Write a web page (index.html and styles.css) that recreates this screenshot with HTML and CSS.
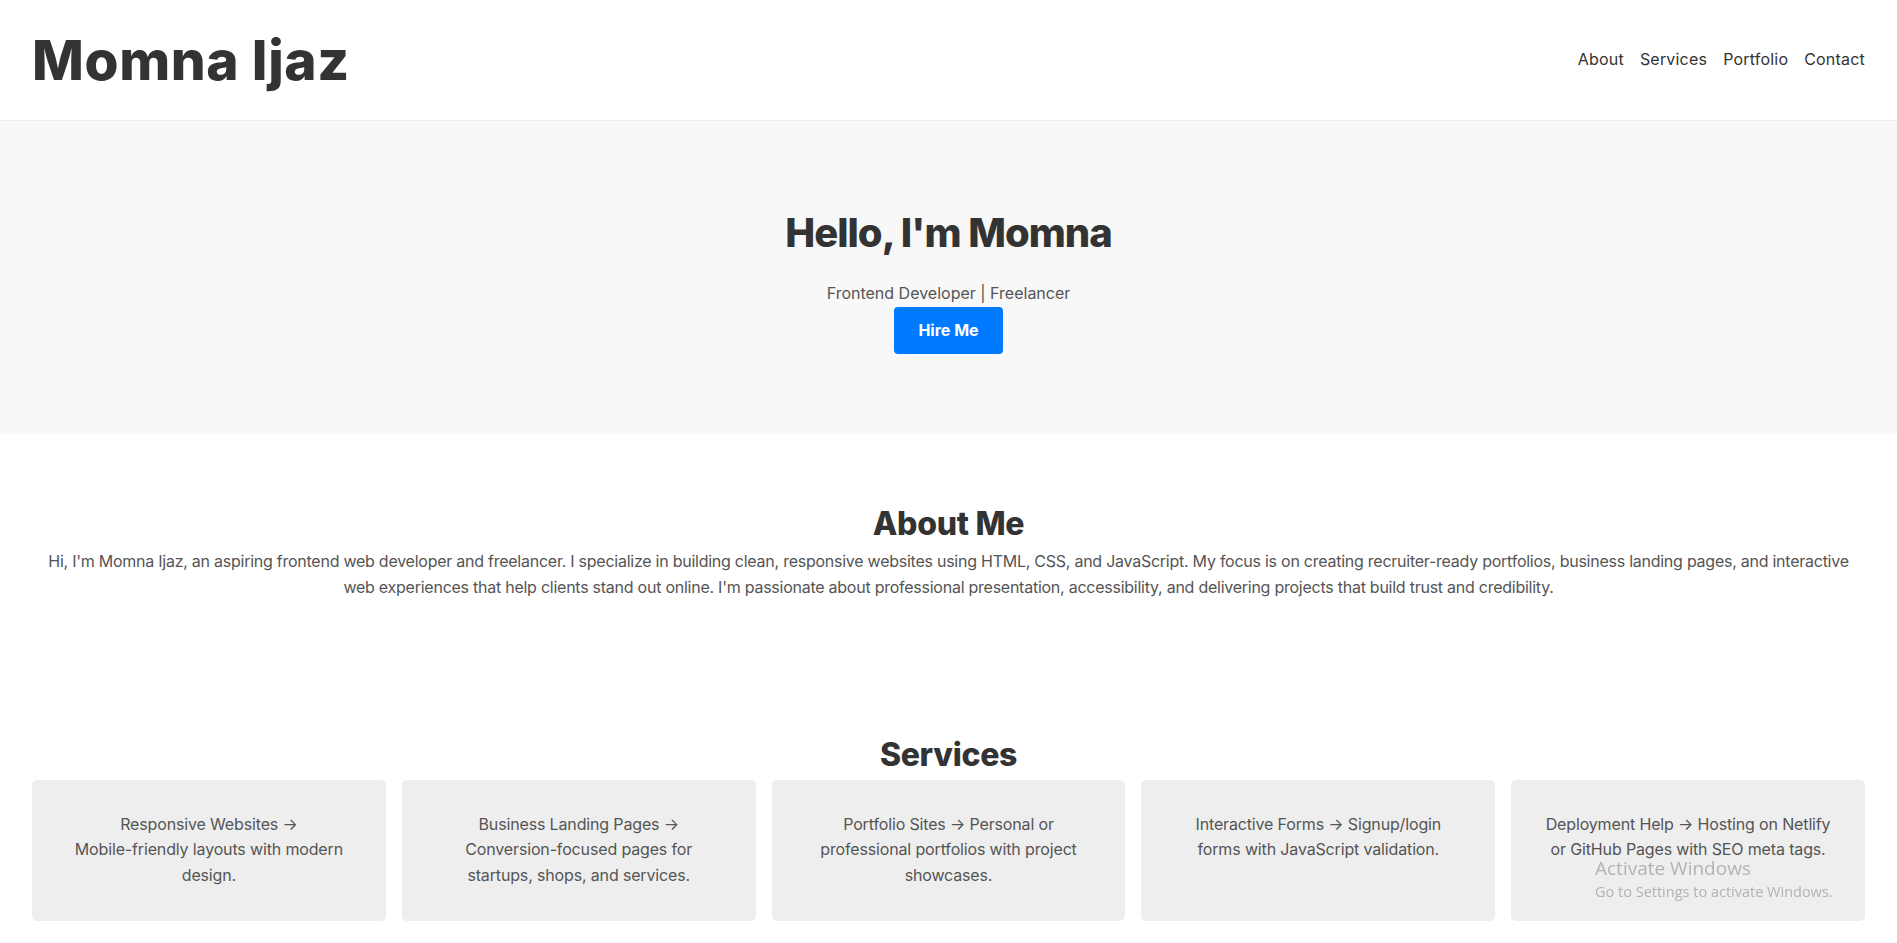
FILE: index.html
```html
<!DOCTYPE html>
<html lang="en">
<head>
  <meta charset="UTF-8">
  <title>Momna Ijaz | Frontend Developer</title>
  <link rel="stylesheet" href="styles.css">
</head>
<body>

<header class="site-header">
  <div class="logo">Momna Ijaz</div>
  <nav class="nav">
    <a href="#about">About</a>
    <a href="#services">Services</a>
    <a href="#portfolio">Portfolio</a>
    <a href="#contact">Contact</a>
  </nav>
</header>

<section class="hero">
  <h1>Hello, I'm Momna</h1>
  <p>Frontend Developer | Freelancer</p>
  <a href="#contact" class="btn">Hire Me</a>
</section>

<section id="about" class="section">
  <h2>About Me</h2>
  <p>Hi, I'm Momna Ijaz, an aspiring frontend web developer and freelancer. I specialize in building clean, responsive websites using HTML, CSS, and JavaScript. My focus is on creating recruiter-ready portfolios, business landing pages, and interactive web experiences that help clients stand out online. I'm passionate about professional presentation, accessibility, and delivering projects that build trust and credibility.</p>
</section>

<section id="services" class="section">
  <h2>Services</h2>
  <div class="service-grid">
    <div class="service-card">Responsive Websites → <span class="nowrap">Mobile-friendly</span> layouts with modern design.</div>
    <div class="service-card">Business Landing Pages → Conversion-focused pages for startups, shops, and services.</div>
    <div class="service-card">Portfolio Sites → Personal or professional portfolios with project showcases.</div>
    <div class="service-card">Interactive Forms → Signup/login forms with JavaScript validation.</div>
    <div class="service-card">Deployment Help → Hosting on Netlify or GitHub Pages with SEO meta tags.</div>
  </div>
</section>

<div class="activate">
  <div class="activate-title">Activate Windows</div>
  <div>Go to Settings to activate Windows.</div>
</div>

</body>
</html>
```

FILE: styles.css
```css
* {
  box-sizing: border-box;
}

body {
  margin: 0;
  font-family: Inter, 'Noto Sans', sans-serif;
  line-height: 1.6;
  color: #333;
  background: #fff;
}

.site-header {
  display: flex;
  justify-content: space-between;
  align-items: center;
  height: 121px;
  padding: 0 32px;
  border-bottom: 1px solid #eee;
}

.logo {
  font-size: 55px;
  font-weight: 800;
  letter-spacing: 0.6px;
  color: #333;
}

.nav {
  display: flex;
  gap: 16px;
}

.nav a {
  color: #333;
  text-decoration: none;
  font-size: 16px;
  letter-spacing: 0.2px;
}

.hero {
  background: #f8f8f8;
  text-align: center;
  padding: 80px 32px;
}

.hero h1 {
  margin: 0 0 16px;
  font-size: 40px;
  font-weight: 800;
  letter-spacing: -1px;
}

.hero p {
  margin: 0;
  color: #555;
}

.btn {
  display: inline-block;
  background: #007bff;
  color: #fff;
  text-decoration: none;
  font-weight: 700;
  padding: 11px 24px;
  border-radius: 4px;
}

.section {
  padding: 64px 32px;
  text-align: center;
}

.section h2 {
  margin: 0;
  font-size: 32px;
  font-weight: 800;
  letter-spacing: -0.3px;
}

.section p {
  margin: 0;
  color: #555;
  letter-spacing: -0.25px;
}

.service-grid {
  display: grid;
  grid-template-columns: repeat(5, 1fr);
  gap: 16px;
}

.service-card {
  background: #eee;
  border-radius: 5px;
  padding: 32px;
  color: #555;
  letter-spacing: -0.15px;
}

.nowrap {
  white-space: nowrap;
}

.activate {
  position: fixed;
  left: 1595px;
  top: 856px;
  font-family: 'Open Sans', 'Noto Sans', sans-serif;
  font-size: 14.5px;
  line-height: 1.5;
  color: rgba(120, 120, 120, 0.5);
}

.activate-title {
  font-size: 19px;
  line-height: 1.3;
}
```
